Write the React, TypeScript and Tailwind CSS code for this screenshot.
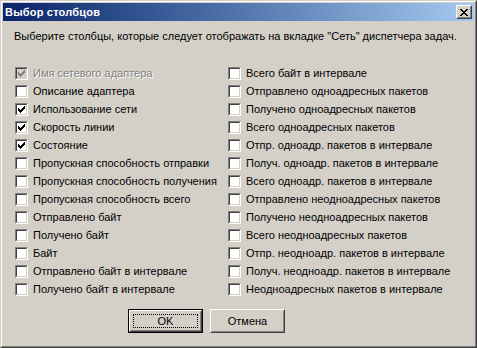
const left: [string, boolean, boolean?][] = [
  ['Имя сетевого адаптера', true, true],
  ['Описание адаптера', false],
  ['Использование сети', true],
  ['Скорость линии', true],
  ['Состояние', true],
  ['Пропускная способность отправки', false],
  ['Пропускная способность получения', false],
  ['Пропускная способность всего', false],
  ['Отправлено байт', false],
  ['Получено байт', false],
  ['Байт', false],
  ['Отправлено байт в интервале', false],
  ['Получено байт в интервале', false],
]

const right: string[] = [
  'Всего байт в интервале',
  'Отправлено одноадресных пакетов',
  'Получено одноадресных пакетов',
  'Всего одноадресных пакетов',
  'Отпр. одноадр. пакетов в интервале',
  'Получ. одноадр. пакетов в интервале',
  'Всего одноадр. пакетов в интервале',
  'Отправлено неодноадресных пакетов',
  'Получено неодноадресных пакетов',
  'Всего неодноадресных пакетов',
  'Отпр. неодноадр. пакетов в интервале',
  'Получ. неодноадр. пакетов в интервале',
  'Неодноадресных пакетов в интервале',
]

function Check({ checked, disabled }: { checked: boolean; disabled?: boolean }) {
  return (
    <div className="w-[13px] h-[13px] shrink-0 border border-t-[#808080] border-l-[#808080] border-r-white border-b-white">
      <div
        className={`w-full h-full border border-t-[#404040] border-l-[#404040] border-r-[#d4d0c8] border-b-[#d4d0c8] ${
          disabled ? 'bg-[#d4d0c8]' : 'bg-white'
        }`}
      >
        {checked && (
          <svg width="7" height="7" viewBox="0 0 7 7" className="ml-px mt-px" shapeRendering="crispEdges">
            <path
              d="M0 2h1v3h-1z M1 3h1v3h-1z M2 4h1v3h-1z M3 3h1v3h-1z M4 2h1v3h-1z M5 1h1v3h-1z M6 0h1v3h-1z"
              fill={disabled ? '#808080' : '#000'}
            />
          </svg>
        )}
      </div>
    </div>
  )
}

function Row({ label, checked, disabled }: { label: string; checked: boolean; disabled?: boolean }) {
  return (
    <div className="h-[18px] flex items-center gap-[5px] whitespace-nowrap">
      <Check checked={checked} disabled={disabled} />
      <span className={disabled ? 'text-[#808080] [text-shadow:1px_1px_0_#fff]' : 'text-black'}>{label}</span>
    </div>
  )
}

export default function App() {
  return (
    <div
      className="w-[477px] h-[348px] bg-[#d4d0c8] border border-t-[#d4d0c8] border-l-[#d4d0c8] border-r-[#404040] border-b-[#404040] text-[11px] leading-[13px] text-black"
      style={{ fontFamily: '"Liberation Sans", Arial, sans-serif' }}
    >
      <div className="h-full border border-t-white border-l-white border-r-[#808080] border-b-[#808080] p-px flex flex-col">
        {/* Title bar */}
        <div className="h-[18px] flex items-center justify-between pl-[2px] pr-[2px] bg-gradient-to-r from-[#0a246a] to-[#a6caf0]">
          <span className="text-white font-bold text-[11px] tracking-[0.2px]">Выбор столбцов</span>
          <div className="w-[16px] h-[14px] border border-t-white border-l-white border-r-[#404040] border-b-[#404040]">
            <div className="w-full h-full bg-[#d4d0c8] border border-t-[#d4d0c8] border-l-[#d4d0c8] border-r-[#808080] border-b-[#808080] flex items-center justify-center">
              <svg width="8" height="7" viewBox="0 0 8 7" shapeRendering="crispEdges">
                <path
                  d="M0 0h2v1h-2z M6 0h2v1h-2z M1 1h2v1h-2z M5 1h2v1h-2z M2 2h4v1h-4z M3 3h2v1h-2z M2 4h4v1h-4z M1 5h2v1h-2z M5 5h2v1h-2z M0 6h2v1h-2z M6 6h2v1h-2z"
                  fill="#000"
                />
              </svg>
            </div>
          </div>
        </div>

        {/* Body */}
        <div className="flex-1 pl-[11px] pt-[9px]">
          <p className="whitespace-nowrap">Выберите столбцы, которые следует отображать на вкладке "Сеть" диспетчера задач.</p>

          <div className="grid grid-cols-[213px_1fr] mt-[21px] pl-px">
            <div className="flex flex-col">
              {left.map(([label, checked, disabled]) => (
                <Row key={label} label={label} checked={checked} disabled={disabled} />
              ))}
            </div>
            <div className="flex flex-col">
              {right.map((label) => (
                <Row key={label} label={label} checked={false} />
              ))}
            </div>
          </div>

          <div className="flex gap-[7px] mt-[11px] ml-[114px]">
            <button className="w-[75px] h-[24px] border border-black">
              <div className="w-full h-full border border-t-white border-l-white border-r-[#404040] border-b-[#404040]">
                <div className="w-full h-full border border-t-[#d4d0c8] border-l-[#d4d0c8] border-r-[#808080] border-b-[#808080] p-[2px]">
                  <div className="w-full h-full border border-dotted border-black flex items-center justify-center">OK</div>
                </div>
              </div>
            </button>
            <button className="w-[75px] h-[24px] border border-t-white border-l-white border-r-[#404040] border-b-[#404040]">
              <div className="w-full h-full border border-t-[#d4d0c8] border-l-[#d4d0c8] border-r-[#808080] border-b-[#808080] flex items-center justify-center">
                Отмена
              </div>
            </button>
          </div>
        </div>
      </div>
    </div>
  )
}
